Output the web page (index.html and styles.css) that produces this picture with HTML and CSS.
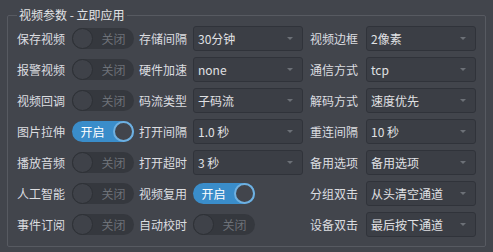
FILE: index.html
```html
<!DOCTYPE html>
<html lang="zh">
<head>
<meta charset="utf-8">
<link rel="stylesheet" href="styles.css">
</head>
<body>
<fieldset class="group">
  <legend class="group-title">视频参数 - 立即应用</legend>
  <div class="grid">
    <span class="lbl">保存视频</span>
    <span class="sw off"><span class="knob"></span><span class="sw-text">关闭</span></span>
    <span class="lbl">存储间隔</span>
    <span class="combo"><span class="val">30分钟</span><span class="arrow"></span></span>
    <span class="lbl">视频边框</span>
    <span class="combo"><span class="val">2像素</span><span class="arrow"></span></span>

    <span class="lbl">报警视频</span>
    <span class="sw off"><span class="knob"></span><span class="sw-text">关闭</span></span>
    <span class="lbl">硬件加速</span>
    <span class="combo"><span class="val">none</span><span class="arrow"></span></span>
    <span class="lbl">通信方式</span>
    <span class="combo"><span class="val">tcp</span><span class="arrow"></span></span>

    <span class="lbl">视频回调</span>
    <span class="sw off"><span class="knob"></span><span class="sw-text">关闭</span></span>
    <span class="lbl">码流类型</span>
    <span class="combo"><span class="val">子码流</span><span class="arrow"></span></span>
    <span class="lbl">解码方式</span>
    <span class="combo"><span class="val">速度优先</span><span class="arrow"></span></span>

    <span class="lbl">图片拉伸</span>
    <span class="sw on"><span class="sw-text">开启</span><span class="knob"></span></span>
    <span class="lbl">打开间隔</span>
    <span class="combo"><span class="val">1.0 秒</span><span class="arrow"></span></span>
    <span class="lbl">重连间隔</span>
    <span class="combo"><span class="val">10 秒</span><span class="arrow"></span></span>

    <span class="lbl">播放音频</span>
    <span class="sw off"><span class="knob"></span><span class="sw-text">关闭</span></span>
    <span class="lbl">打开超时</span>
    <span class="combo"><span class="val">3 秒</span><span class="arrow"></span></span>
    <span class="lbl">备用选项</span>
    <span class="combo"><span class="val">备用选项</span><span class="arrow"></span></span>

    <span class="lbl">人工智能</span>
    <span class="sw off"><span class="knob"></span><span class="sw-text">关闭</span></span>
    <span class="lbl">视频复用</span>
    <span class="sw on"><span class="sw-text">开启</span><span class="knob"></span></span>
    <span class="lbl">分组双击</span>
    <span class="combo"><span class="val">从头清空通道</span><span class="arrow"></span></span>

    <span class="lbl">事件订阅</span>
    <span class="sw off"><span class="knob"></span><span class="sw-text">关闭</span></span>
    <span class="lbl">自动校时</span>
    <span class="sw off"><span class="knob"></span><span class="sw-text">关闭</span></span>
    <span class="lbl">设备双击</span>
    <span class="combo"><span class="val">最后按下通道</span><span class="arrow"></span></span>
  </div>
</fieldset>
</body>
</html>
```

FILE: styles.css
```css
html, body {
  margin: 0;
  padding: 0;
  background: #42454c;
}
body {
  width: 493px;
  height: 252px;
  padding: 7px 0 0 7px;
  box-sizing: border-box;
  font-family: "Noto Sans CJK SC", "Noto Sans", sans-serif;
  font-size: 12px;
  color: #dcdde0;
  overflow: hidden;
}
.group {
  margin: 0;
  width: 479px;
  height: 240px;
  box-sizing: border-box;
  padding: 0 0 6px 0;
  border: 1px solid #575a61;
  border-radius: 2px;
}
.group-title {
  margin-left: 9px;
  padding: 0 2px;
  font-size: 12px;
  line-height: 16px;
  color: #e2e3e6;
}
.grid {
  display: grid;
  grid-template-columns: 55px 67px 54px 117px 56px 109px;
  grid-auto-rows: 31px;
  align-items: center;
  padding-left: 9px;
}
.lbl {
  white-space: nowrap;
  line-height: 16px;
}
.combo {
  display: flex;
  align-items: center;
  justify-content: space-between;
  width: 110px;
  height: 25px;
  box-sizing: border-box;
  padding: 0 9px 0 4px;
  background: #3b3e45;
  border: 1px solid #30333a;
  border-radius: 3px;
  white-space: nowrap;
}
.combo .val {
  line-height: 16px;
  color: #e0e1e4;
}
.arrow {
  width: 0;
  height: 0;
  border-left: 3px solid transparent;
  border-right: 3px solid transparent;
  border-top: 3px solid #6c7077;
}
.sw {
  display: flex;
  align-items: center;
  width: 62px;
  height: 21px;
  box-sizing: border-box;
  border-radius: 11px;
  position: relative;
}
.sw .knob {
  width: 21px;
  height: 21px;
  box-sizing: border-box;
  border-radius: 50%;
  flex: none;
}
.sw-text {
  flex: 1;
  text-align: center;
  line-height: 16px;
}
.sw.off {
  background: #35383e;
}
.sw.off .knob {
  background: #3f4249;
  border: 1px solid #2d3035;
}
.sw.off .sw-text {
  color: #6d7178;
}
.sw.on {
  background: #3a8dca;
}
.sw.on .knob {
  background: #42454c;
  border: 2px solid #6fb0e0;
}
.sw.on .sw-text {
  color: #ffffff;
}
```
